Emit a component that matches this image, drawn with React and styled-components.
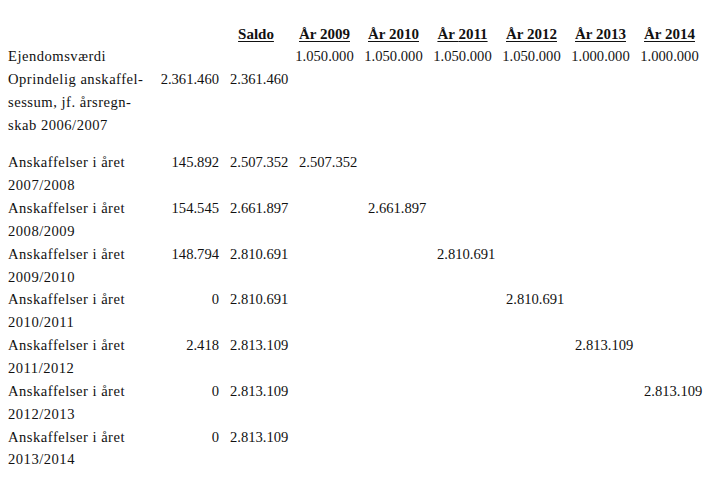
import React from "react";
import styled, { createGlobalStyle } from "styled-components";

const GlobalStyle = createGlobalStyle`
    html, body {
        margin: 0;
        padding: 0;
        background: #fff;
    }
    body {
        font-family: "Liberation Serif", "Times New Roman", serif;
        color: #111;
    }
`;

const Page = styled.div`
    padding: 26px 0 0 8px;
`;

const Table = styled.table`
    border-collapse: collapse;
    table-layout: fixed;
    width: 696px;
`;

const HeadCell = styled.th`
    padding: 0;
    height: 19px;
    font-size: 15px;
    font-weight: bold;
    text-align: center;
    vertical-align: top;
    span {
        text-decoration: underline;
        text-underline-offset: 2px;
    }
`;

const Row = styled.tr`
    td {
        padding-bottom: ${({ $gap }) => $gap || 0}px;
    }
`;

const Label = styled.td`
    padding: 0;
    font-size: 14.6px;
    line-height: 22.85px;
    vertical-align: top;
    letter-spacing: 0.5px;
`;

const Amount = styled.td`
    padding: 0 3px 0 0;
    font-size: 14.6px;
    line-height: 22.85px;
    text-align: right;
    vertical-align: top;
`;

const Value = styled.td`
    padding: 0 0 0 ${({ $indent }) => ($indent === undefined ? 9 : $indent)}px;
    font-size: 14.6px;
    line-height: 22.85px;
    text-align: ${({ $center }) => ($center ? "center" : "left")};
    vertical-align: top;
    white-space: nowrap;
`;

const years = [2009, 2010, 2011, 2012, 2013, 2014];

const rows = [
    { label: ["Anskaffelser i året", "2007/2008"], amount: "145.892", saldo: "2.507.352", col: 0 },
    { label: ["Anskaffelser i året", "2008/2009"], amount: "154.545", saldo: "2.661.897", col: 1 },
    { label: ["Anskaffelser i året", "2009/2010"], amount: "148.794", saldo: "2.810.691", col: 2 },
    { label: ["Anskaffelser i året", "2010/2011"], amount: "0", saldo: "2.810.691", col: 3 },
    { label: ["Anskaffelser i året", "2011/2012"], amount: "2.418", saldo: "2.813.109", col: 4 },
    { label: ["Anskaffelser i året", "2012/2013"], amount: "0", saldo: "2.813.109", col: 5 },
    { label: ["Anskaffelser i året", "2013/2014"], amount: "0", saldo: "2.813.109", col: -1 },
];

const values = ["1.050.000", "1.050.000", "1.050.000", "1.050.000", "1.000.000", "1.000.000"];

export default function App() {
    return (
        <Page>
            <GlobalStyle />
            <Table>
                <colgroup>
                    <col style={{ width: 145 }} />
                    <col style={{ width: 69 }} />
                    <col style={{ width: 68 }} />
                    {years.map((y) => (
                        <col key={y} style={{ width: 69 }} />
                    ))}
                </colgroup>
                <thead>
                    <tr>
                        <HeadCell />
                        <HeadCell />
                        <HeadCell><span>Saldo</span></HeadCell>
                        {years.map((y) => (
                            <HeadCell key={y}><span>År {y}</span></HeadCell>
                        ))}
                    </tr>
                </thead>
                <tbody>
                    <Row>
                        <Label>Ejendomsværdi</Label>
                        <Amount />
                        <Value />
                        {values.map((v, i) => (
                            <Value key={i} $center $indent={0}>{v}</Value>
                        ))}
                    </Row>
                    <Row $gap={15}>
                        <Label>
                            Oprindelig anskaffel-<br />
                            sessum, jf. årsregn-<br />
                            skab 2006/2007
                        </Label>
                        <Amount>2.361.460</Amount>
                        <Value $indent={8}>2.361.460</Value>
                        {years.map((y) => (
                            <Value key={y} />
                        ))}
                    </Row>
                    {rows.map((r, i) => (
                        <Row key={i}>
                            <Label>
                                {r.label[0]}<br />
                                {r.label[1]}
                            </Label>
                            <Amount>{r.amount}</Amount>
                            <Value $indent={8}>{r.saldo}</Value>
                            {years.map((y, j) => (
                                <Value key={y}>{j === r.col ? r.saldo : ""}</Value>
                            ))}
                        </Row>
                    ))}
                </tbody>
            </Table>
        </Page>
    );
}
